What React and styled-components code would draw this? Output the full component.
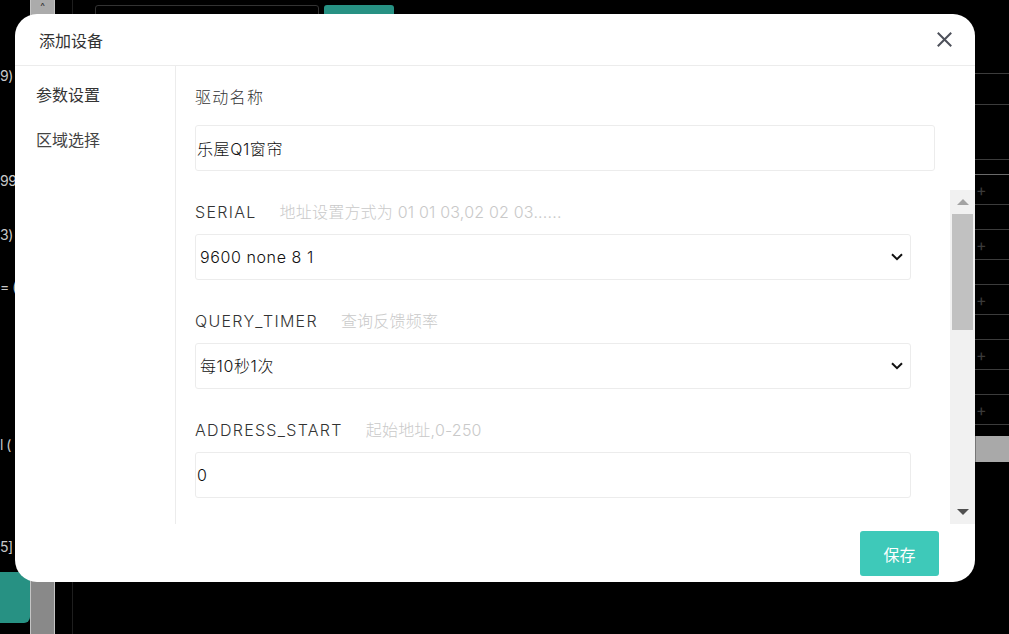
import React from 'react';
import styled, { createGlobalStyle } from 'styled-components';

const GlobalStyle = createGlobalStyle`
  html, body {
    margin: 0;
    padding: 0;
    background: #000;
    overflow: hidden;
  }
  body {
    font-family: Inter, "Noto Sans CJK SC", sans-serif;
  }
  * { box-sizing: border-box; }
`;

/* ---------- the app behind the dialog ---------- */

const Page = styled.div`
  position: relative;
  width: 1009px;
  height: 634px;
  display: flex;
  background: #000;
  overflow: hidden;
`;

const LeftList = styled.div`
  width: 30px;
  flex: none;
  display: flex;
  flex-direction: column;
  color: #c8c8c8;
  font-size: 14px;
`;

const LeftLine = styled.div`
  margin-top: ${p => p.$gap}px;
  height: 20px;
  line-height: 20px;
  white-space: nowrap;
  letter-spacing: -0.5px;
`;

const LeftButton = styled.div`
  margin-top: auto;
  margin-bottom: 11px;
  height: 51px;
  width: 30px;
  background: #279183;
  border-radius: 0 0 6px 0;
`;

const LeftScroll = styled.div`
  width: 25px;
  flex: none;
  background: #898989;
  border-left: 1px solid #c4c4c4;
  border-right: 1px solid #c4c4c4;
`;

const LeftScrollTop = styled.div`
  height: 15px;
  background: #ababab;
  color: #333;
  font-size: 10px;
  text-align: center;
  line-height: 12px;
`;

const Workspace = styled.div`
  flex: 1;
  margin-left: 17px;
  border-left: 1px solid #1e1e1e;
  display: flex;
`;

const WorkMain = styled.div`
  flex: 1;
  padding: 5px 0 0 22px;
`;

const TopBar = styled.div`
  display: flex;
  gap: 5px;
`;

const TopSearch = styled.div`
  width: 224px;
  height: 32px;
  border: 1px solid #333;
  border-radius: 3px;
`;

const TopButton = styled.div`
  width: 70px;
  height: 32px;
  background: #279183;
  border-radius: 3px;
`;

const RightPanel = styled.div`
  width: 34px;
  flex: none;
  padding-top: 73px;
  display: flex;
  flex-direction: column;
`;

const Segment = styled.div`
  height: ${p => p.$h}px;
  border-top: 1px solid ${p => (p.$bright ? '#6a6a6a' : '#3c3c3c')};
  color: #3a3a3a;
  font-size: 16px;
  line-height: ${p => p.$h}px;
  padding-left: 1px;
`;

const Block = styled.div`
  margin-top: 11px;
  height: 26px;
  background: #a9a9a9;
  border-left: 1px solid #777;
`;

/* ---------- dialog ---------- */

const Modal = styled.div`
  position: absolute;
  left: 15px;
  top: 14px;
  width: 960px;
  height: 568px;
  background: #fff;
  border-radius: 22px;
  display: flex;
  flex-direction: column;
  overflow: hidden;
`;

const Header = styled.div`
  height: 52px;
  flex: none;
  display: flex;
  align-items: center;
  justify-content: space-between;
  padding: 0 23px 0 24px;
  border-bottom: 1px solid #ececec;
`;

const Title = styled.div`
  font-size: 16px;
  color: #333;
`;

const Close = styled.button`
  border: 0;
  background: none;
  padding: 0;
  width: 15px;
  height: 15px;
  display: flex;
  cursor: pointer;
`;

const Body = styled.div`
  flex: 1;
  display: flex;
  min-height: 0;
`;

const Sidebar = styled.div`
  width: 161px;
  flex: none;
  border-right: 1px solid #ececec;
  padding: 7px 0 0 21px;
`;

const MenuItem = styled.div`
  height: 45px;
  line-height: 45px;
  font-size: 16px;
  color: ${p => (p.$active ? '#333' : '#444')};
`;

const Main = styled.div`
  flex: 1;
  display: flex;
  flex-direction: column;
  padding-left: 19px;
  min-width: 0;
`;

const TopSection = styled.div`
  padding: 20px 40px 19px 0;
`;

const Label = styled.div`
  height: 22px;
  line-height: 22px;
  font-size: 16px;
  font-weight: 300;
  color: #333;
  letter-spacing: 1.3px;
  margin-bottom: ${p => p.$mb}px;
  white-space: nowrap;
`;

const Hint = styled.span`
  color: #c9c9c9;
  margin-left: 23px;
  letter-spacing: 0.2px;
`;

const TextInput = styled.input`
  display: block;
  width: 100%;
  height: 46px;
  border: 1px solid #ececec;
  border-radius: 3px;
  padding: 0 1px;
  font: inherit;
  font-size: 16px;
  font-weight: 300;
  letter-spacing: 0.6px;
  color: #111;
  outline: none;
  background: #fff;
`;

const SelectWrap = styled.div`
  position: relative;
`;

const Select = styled.select`
  display: block;
  width: 100%;
  height: 46px;
  border: 1px solid #ececec;
  border-radius: 3px;
  padding: 0 4px;
  font: inherit;
  font-size: 16px;
  font-weight: 300;
  letter-spacing: 0.6px;
  color: #111;
  background: #fff;
  appearance: none;
  outline: none;
`;

const Chevron = styled.svg`
  position: absolute;
  right: 8px;
  top: 19px;
  pointer-events: none;
`;

const ScrollArea = styled.div`
  flex: 1;
  display: flex;
  min-height: 0;
`;

const Fields = styled.div`
  flex: 1;
  overflow: hidden;
  padding: 11px 39px 0 0;
`;

const Field = styled.div`
  margin-bottom: 30px;
`;

const Scrollbar = styled.div`
  width: 25px;
  flex: none;
  background: #f1f1f1;
  display: flex;
  flex-direction: column;
  align-items: center;
`;

const Arrow = styled.div`
  height: 24px;
  width: 100%;
  display: flex;
  align-items: center;
  justify-content: center;
  &::before {
    content: '';
    border-left: 6px solid transparent;
    border-right: 6px solid transparent;
    ${p => (p.$down
      ? `border-top: 6px solid ${p.$color};`
      : `border-bottom: 6px solid ${p.$color};`)}
  }
`;

const Thumb = styled.div`
  width: 21px;
  height: 116px;
  background: #c1c1c1;
`;

const Track = styled.div`
  flex: 1;
`;

const Footer = styled.div`
  height: 58px;
  flex: none;
  display: flex;
  justify-content: flex-end;
  padding: 7px 36px 0 0;
`;

const SaveButton = styled.button`
  width: 79px;
  height: 45px;
  border: 0;
  border-radius: 3px;
  background: #3ec9b9;
  color: #fff;
  font: inherit;
  font-size: 16px;
  cursor: pointer;
`;

const leftLines = [
  { gap: 66, text: '9)' },
  { gap: 85, text: '99' },
  { gap: 34, text: '3)' },
  { gap: 32, text: '= (.' },
  { gap: 138, text: 'l (' },
  { gap: 82, text: '5]' },
];

const segments = [
  { h: 31 }, { h: 55 }, { h: 15 },
  { h: 30, plus: true, bright: true }, { h: 25 },
  { h: 30, plus: true }, { h: 25 },
  { h: 30, plus: true }, { h: 25 },
  { h: 30, plus: true }, { h: 25 },
  { h: 30, plus: true }, { h: 0 },
];

function SelectField({ value, options }) {
  return (
    <SelectWrap>
      <Select defaultValue={value}>
        {options.map(o => <option key={o}>{o}</option>)}
      </Select>
      <Chevron width="12" height="8" viewBox="0 0 12 8">
        <path d="M1 1.2 L6 6.2 L11 1.2" fill="none" stroke="#111" strokeWidth="2" />
      </Chevron>
    </SelectWrap>
  );
}

export default function App() {
  return (
    <>
      <GlobalStyle />
      <Page>
        <LeftList>
          {leftLines.map((l, i) => (
            <LeftLine key={i} $gap={l.gap}>{l.text}</LeftLine>
          ))}
          <LeftButton />
        </LeftList>
        <LeftScroll>
          <LeftScrollTop>^</LeftScrollTop>
        </LeftScroll>
        <Workspace>
          <WorkMain>
            <TopBar>
              <TopSearch />
              <TopButton />
            </TopBar>
          </WorkMain>
          <RightPanel>
            {segments.map((s, i) => (
              <Segment key={i} $h={s.h} $bright={s.bright}>{s.plus ? '+' : ''}</Segment>
            ))}
            <Block />
          </RightPanel>
        </Workspace>

        <Modal>
          <Header>
            <Title>添加设备</Title>
            <Close aria-label="关闭">
              <svg width="15" height="15" viewBox="0 0 15 15">
                <path d="M1.5 1.5 L13.5 13.5 M13.5 1.5 L1.5 13.5" stroke="#4d505a" strokeWidth="2" strokeLinecap="square" />
              </svg>
            </Close>
          </Header>
          <Body>
            <Sidebar>
              <MenuItem $active>参数设置</MenuItem>
              <MenuItem>区域选择</MenuItem>
            </Sidebar>
            <Main>
              <TopSection>
                <Label $mb={17}>驱动名称</Label>
                <TextInput defaultValue="乐屋Q1窗帘" />
              </TopSection>
              <ScrollArea>
                <Fields>
                  <Field>
                    <Label $mb={11}>SERIAL<Hint>地址设置方式为 01 01 03,02 02 03......</Hint></Label>
                    <SelectField value="9600 none 8 1" options={['9600 none 8 1', '19200 none 8 1']} />
                  </Field>
                  <Field>
                    <Label $mb={11}>QUERY_TIMER<Hint>查询反馈频率</Hint></Label>
                    <SelectField value="每10秒1次" options={['每10秒1次', '每30秒1次']} />
                  </Field>
                  <Field>
                    <Label $mb={11}>ADDRESS_START<Hint>起始地址,0-250</Hint></Label>
                    <TextInput defaultValue="0" />
                  </Field>
                </Fields>
                <Scrollbar>
                  <Arrow $color="#a3a3a3" />
                  <Thumb />
                  <Track />
                  <Arrow $down $color="#505050" />
                </Scrollbar>
              </ScrollArea>
            </Main>
          </Body>
          <Footer>
            <SaveButton>保存</SaveButton>
          </Footer>
        </Modal>
      </Page>
    </>
  );
}
